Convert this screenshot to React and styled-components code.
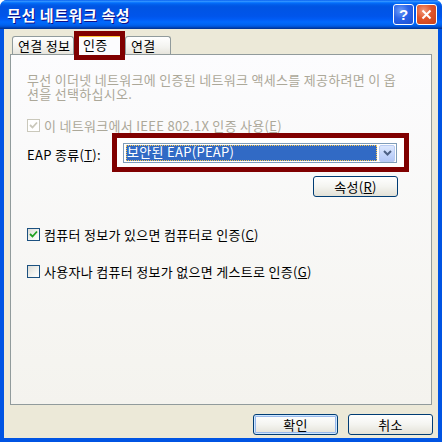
import styled, { createGlobalStyle, css } from "styled-components";

const GlobalStyle = createGlobalStyle`
  html, body {
    margin: 0;
    padding: 0;
    background: #ffffff;
  }
  body {
    font-family: "Noto Sans CJK KR", "Noto Sans", sans-serif;
    font-size: 13px;
    letter-spacing: 0.3px;
  }
`;

const Window = styled.div`
  width: 442px;
  height: 442px;
  box-sizing: border-box;
  display: flex;
  flex-direction: column;
  border-radius: 7px 7px 0 0;
  overflow: hidden;
  background: #0054e3;
`;

const TitleBar = styled.div`
  height: 29px;
  flex-shrink: 0;
  display: flex;
  align-items: center;
  padding: 0 5px 0 7px;
  background: linear-gradient(
    to bottom,
    #0058ee 0%,
    #3593ff 4%,
    #288eff 6%,
    #127dff 8%,
    #036ffc 10%,
    #0262ee 14%,
    #0057e5 20%,
    #0054e3 24%,
    #0055eb 56%,
    #005bf5 66%,
    #026afe 76%,
    #0062ef 86%,
    #0052d6 92%,
    #0040ab 96%,
    #003092 100%
  );
`;

const Title = styled.div`
  flex: 1;
  color: #ffffff;
  font-weight: 700;
  font-size: 15px;
  line-height: 17px;
  text-shadow: 1px 1px #0f1089;
  letter-spacing: 0.6px;
`;

const CaptionButton = styled.div`
  width: 21px;
  height: 21px;
  box-sizing: border-box;
  margin-left: 2px;
  border: 1px solid #ffffff;
  border-radius: 3px;
  display: flex;
  align-items: center;
  justify-content: center;
  color: #ffffff;
  font-family: "Liberation Sans", Arial, sans-serif;
  font-weight: 700;
  font-size: 15px;
  letter-spacing: 0;
  ${(p) =>
    p.$kind === "close"
      ? css`
          background: radial-gradient(circle at 35% 30%, #f39a7c 0%, #e0542a 45%, #c7401a 100%);
        `
      : css`
          background: radial-gradient(circle at 35% 30%, #6f9cf7 0%, #2a63e8 45%, #1d4fd1 100%);
        `}
`;

const Client = styled.div`
  flex: 1;
  margin: 0 4px 4px;
  background: #ece9d8;
  display: flex;
  flex-direction: column;
  padding: 5px 6px 0;
`;

const TabStrip = styled.div`
  display: flex;
  align-items: flex-end;
  height: 20px;
  padding-left: 2px;
  position: relative;
  z-index: 1;
`;

const Tab = styled.div`
  box-sizing: border-box;
  width: ${(p) => p.$width}px;
  height: 18px;
  padding-left: ${(p) => p.$pad}px;
  border: 1px solid #919b9c;
  border-bottom: none;
  border-radius: 3px 3px 0 0;
  background: linear-gradient(to bottom, #ffffff 0%, #f3f3ef 60%, #e6e4dc 100%);
  line-height: 17px;
  color: #000000;
  white-space: nowrap;
  ${(p) =>
    p.$active &&
    css`
      position: relative;
      height: 21px;
      margin-bottom: -1px;
      background: #fcfcfe;
      border-top: 3px solid #ffc83c;
      line-height: 16px;
      &::after {
        content: "";
        position: absolute;
        left: -1px;
        right: -1px;
        top: -6px;
        bottom: -5px;
        border: 5px solid #800000;
      }
    `}
`;

const Panel = styled.div`
  height: 351px;
  box-sizing: border-box;
  border: 1px solid #919b9c;
  background: linear-gradient(to bottom, #fcfcfe 0%, #f4f3ee 100%);
  padding: 18px 16px 0 16px;
  display: flex;
  flex-direction: column;
`;

const Description = styled.p`
  margin: 0;
  color: #aca899;
  line-height: 14px;
  white-space: nowrap;
`;

const CheckRow = styled.label`
  display: flex;
  align-items: center;
  gap: 4px;
  height: 13px;
  margin-top: ${(p) => p.$top}px;
  color: ${(p) => (p.$disabled ? "#aca899" : "#000000")};
  line-height: 13px;
  white-space: nowrap;
`;

const Box = styled.span`
  width: 13px;
  height: 13px;
  box-sizing: border-box;
  flex-shrink: 0;
  border: 1px solid ${(p) => (p.$disabled ? "#cac8bb" : "#1c5180")};
  background: ${(p) =>
    p.$disabled ? "#ffffff" : "linear-gradient(135deg, #dcdcd7 0%, #f4f4f0 60%, #ffffff 100%)"};
  display: flex;
  align-items: center;
  justify-content: center;
`;

const Key = styled.span`
  text-decoration: underline;
  text-underline-offset: 1px;
`;

const EapRow = styled.div`
  display: flex;
  align-items: center;
  margin-top: 1px;
`;

const FieldLabel = styled.span`
  width: 85px;
  flex-shrink: 0;
  padding-top: 3px;
  white-space: nowrap;
`;

const Highlight = styled.div`
  width: 297px;
  box-sizing: border-box;
  border: 5px solid #800000;
  background: #ffffff;
  padding: 5px 7px 4px 6px;
`;

const Select = styled.div`
  height: 20px;
  box-sizing: border-box;
  border: 1px solid #7f9db9;
  background: #ffffff;
  display: flex;
  align-items: center;
  padding: 1px 1px 1px 2px;
`;

const SelectValue = styled.div`
  flex: 1;
  height: 16px;
  box-sizing: border-box;
  background: #316ac5;
  color: #ffffff;
  line-height: 14px;
  padding-left: 1px;
  outline: 1px dotted #f8c850;
  outline-offset: -1px;
  white-space: nowrap;
`;

const ArrowButton = styled.div`
  width: 16px;
  height: 17px;
  margin-left: 2px;
  box-sizing: border-box;
  border: 1px solid #b9ccf3;
  border-radius: 2px;
  background: linear-gradient(to bottom, #dde8fd 0%, #c1d3fb 60%, #b4c8f6 100%);
  display: flex;
  align-items: center;
  justify-content: center;
`;

const ButtonRow = styled.div`
  display: flex;
  justify-content: flex-end;
  margin-top: ${(p) => p.$top || 0}px;
  padding-right: ${(p) => p.$right || 0}px;
`;

const Button = styled.div`
  width: 85px;
  height: 21px;
  box-sizing: border-box;
  border: 1px solid #003c74;
  border-radius: 3px;
  background: linear-gradient(to bottom, #ffffff 0%, #f4f4f0 50%, #e3e1d7 100%);
  display: flex;
  align-items: center;
  justify-content: center;
  color: #000000;
  line-height: 14px;
  white-space: nowrap;
  ${(p) =>
    p.$default &&
    css`
      box-shadow: inset 0 0 0 1px #cee7ff, inset 0 0 0 2px #98b8ea;
    `}
`;

const Footer = styled.div`
  display: flex;
  justify-content: flex-end;
  gap: 10px;
  margin-top: 9px;
  margin-right: -1px;
`;

function Check({ checked, disabled }) {
  return (
    <Box $disabled={disabled}>
      {checked && (
        <svg width="9" height="9" viewBox="0 0 9 9">
          <path
            d="M1 4 L3.5 6.5 L8 1.5"
            fill="none"
            stroke={disabled ? "#cac8bb" : "#21a121"}
            strokeWidth="1.8"
          />
        </svg>
      )}
    </Box>
  );
}

export default function App() {
  return (
    <>
      <GlobalStyle />
      <Window>
        <TitleBar>
          <Title>무선 네트워크 속성</Title>
          <CaptionButton $kind="help">?</CaptionButton>
          <CaptionButton $kind="close">
            <svg width="11" height="11" viewBox="0 0 11 11">
              <path d="M1.5 1.5 L9.5 9.5 M9.5 1.5 L1.5 9.5" stroke="#ffffff" strokeWidth="2" />
            </svg>
          </CaptionButton>
        </TitleBar>
        <Client>
          <TabStrip>
            <Tab $width={62} $pad={5}>연결 정보</Tab>
            <Tab $width={51} $pad={8} $active>인증</Tab>
            <Tab $width={46} $pad={5}>연결</Tab>
          </TabStrip>
          <Panel>
            <Description>
              무선 이더넷 네트워크에 인증된 네트워크 액세스를 제공하려면 이 옵
              <br />
              션을 선택하십시오.
            </Description>
            <CheckRow $top={18} $disabled>
              <Check checked disabled />
              <span>
                이 네트워크에서 IEEE 802.1X 인증 사용(<Key>E</Key>)
              </span>
            </CheckRow>
            <EapRow>
              <FieldLabel>
                EAP 종류(<Key>T</Key>):
              </FieldLabel>
              <Highlight>
                <Select>
                  <SelectValue>보안된 EAP(PEAP)</SelectValue>
                  <ArrowButton>
                    <svg width="9" height="6" viewBox="0 0 9 6">
                      <path d="M1 1 L4.5 4.5 L8 1" fill="none" stroke="#4d6185" strokeWidth="2" />
                    </svg>
                  </ArrowButton>
                </Select>
              </Highlight>
            </EapRow>
            <ButtonRow $top={4} $right={17}>
              <Button>
                <span>
                  속성(<Key>R</Key>)
                </span>
              </Button>
            </ButtonRow>
            <CheckRow $top={31}>
              <Check checked />
              <span>
                컴퓨터 정보가 있으면 컴퓨터로 인증(<Key>C</Key>)
              </span>
            </CheckRow>
            <CheckRow $top={24}>
              <Check />
              <span>
                사용자나 컴퓨터 정보가 없으면 게스트로 인증(<Key>G</Key>)
              </span>
            </CheckRow>
          </Panel>
          <Footer>
            <Button $default>확인</Button>
            <Button>취소</Button>
          </Footer>
        </Client>
      </Window>
    </>
  );
}
